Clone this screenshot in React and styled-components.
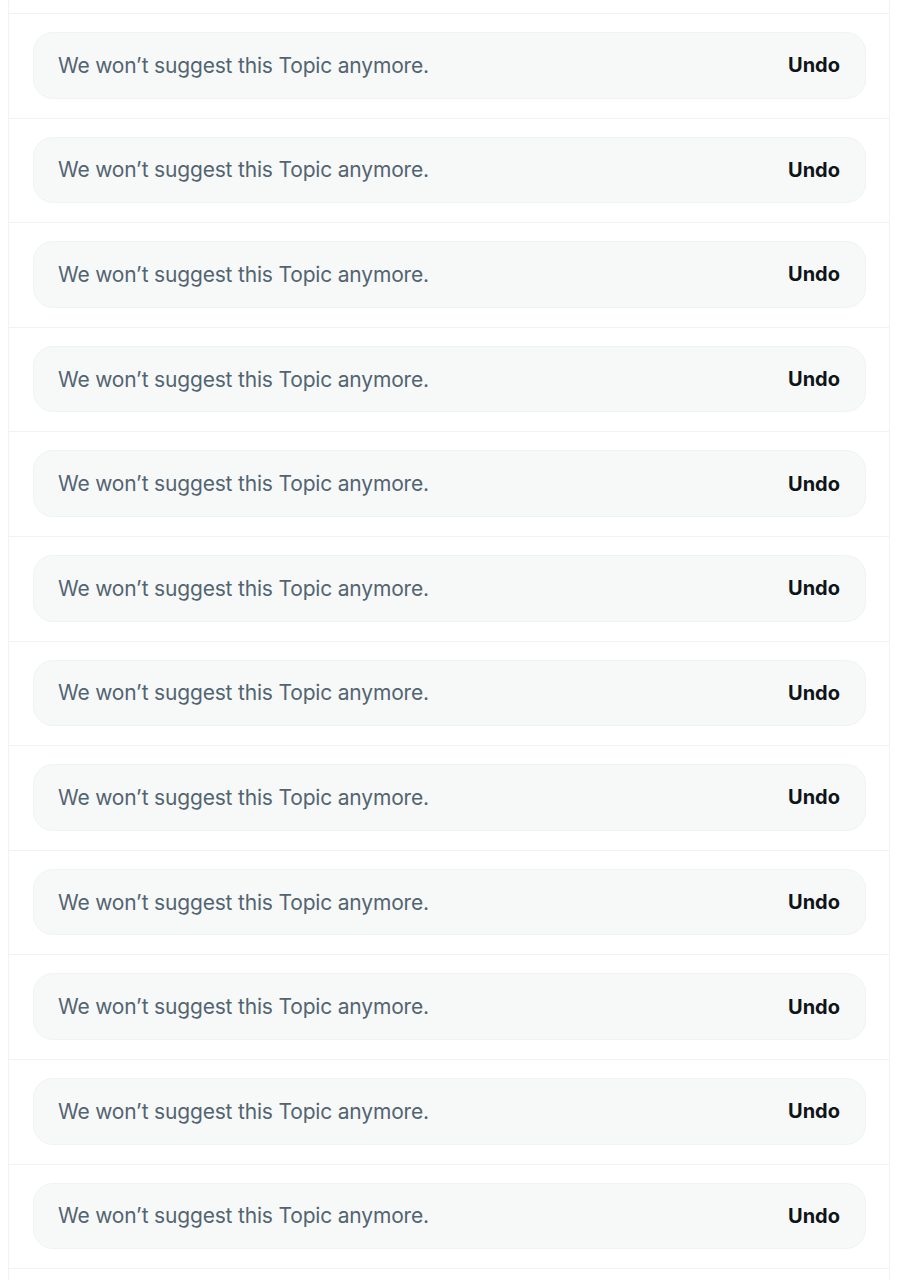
import React from 'react';
import styled, { createGlobalStyle } from 'styled-components';

const GlobalStyle = createGlobalStyle`
  html, body {
    margin: 0;
    padding: 0;
    background: #ffffff;
  }
  body {
    font-family: Inter, "Noto Sans", "Liberation Sans", sans-serif;
    -webkit-font-smoothing: antialiased;
  }
`;

const Column = styled.div`
  margin-left: 8px;
  width: 882px;
  border-left: 1px solid #eff3f4;
  border-right: 1px solid #eff3f4;
  height: 1280px;
  overflow: hidden;
  box-sizing: border-box;
`;

const Spill = styled.div`
  height: 13px;
  border-top: ${p => (p.$end ? '1px solid #eff3f4' : '0')};
`;

const Row = styled.div`
  border-top: 1px solid #eff3f4;
  padding: 18px 23px 19px 24px;
`;

const Notice = styled.div`
  display: flex;
  align-items: center;
  justify-content: space-between;
  height: 66.6px;
  box-sizing: border-box;
  padding: 0 25px 0 24px;
  background: #f7f9f9;
  border: 1px solid #eff3f4;
  border-radius: 20px;
`;

const Message = styled.span`
  font-size: 21px;
  letter-spacing: -0.18px;
  color: #536471;
`;

const UndoButton = styled.button`
  border: 0;
  background: none;
  padding: 0;
  font-family: inherit;
  font-size: 20px;
  font-weight: 700;
  color: #0f1419;
  cursor: pointer;
`;

const rows = Array.from({ length: 12 }, (_, i) => i);

const App = () => (
  <>
    <GlobalStyle />
    <Column>
      <Spill />
      {rows.map(i => (
        <Row key={i}>
          <Notice>
            <Message>We won’t suggest this Topic anymore.</Message>
            <UndoButton>Undo</UndoButton>
          </Notice>
        </Row>
      ))}
      <Spill $end />
    </Column>
  </>
);

export default App;
